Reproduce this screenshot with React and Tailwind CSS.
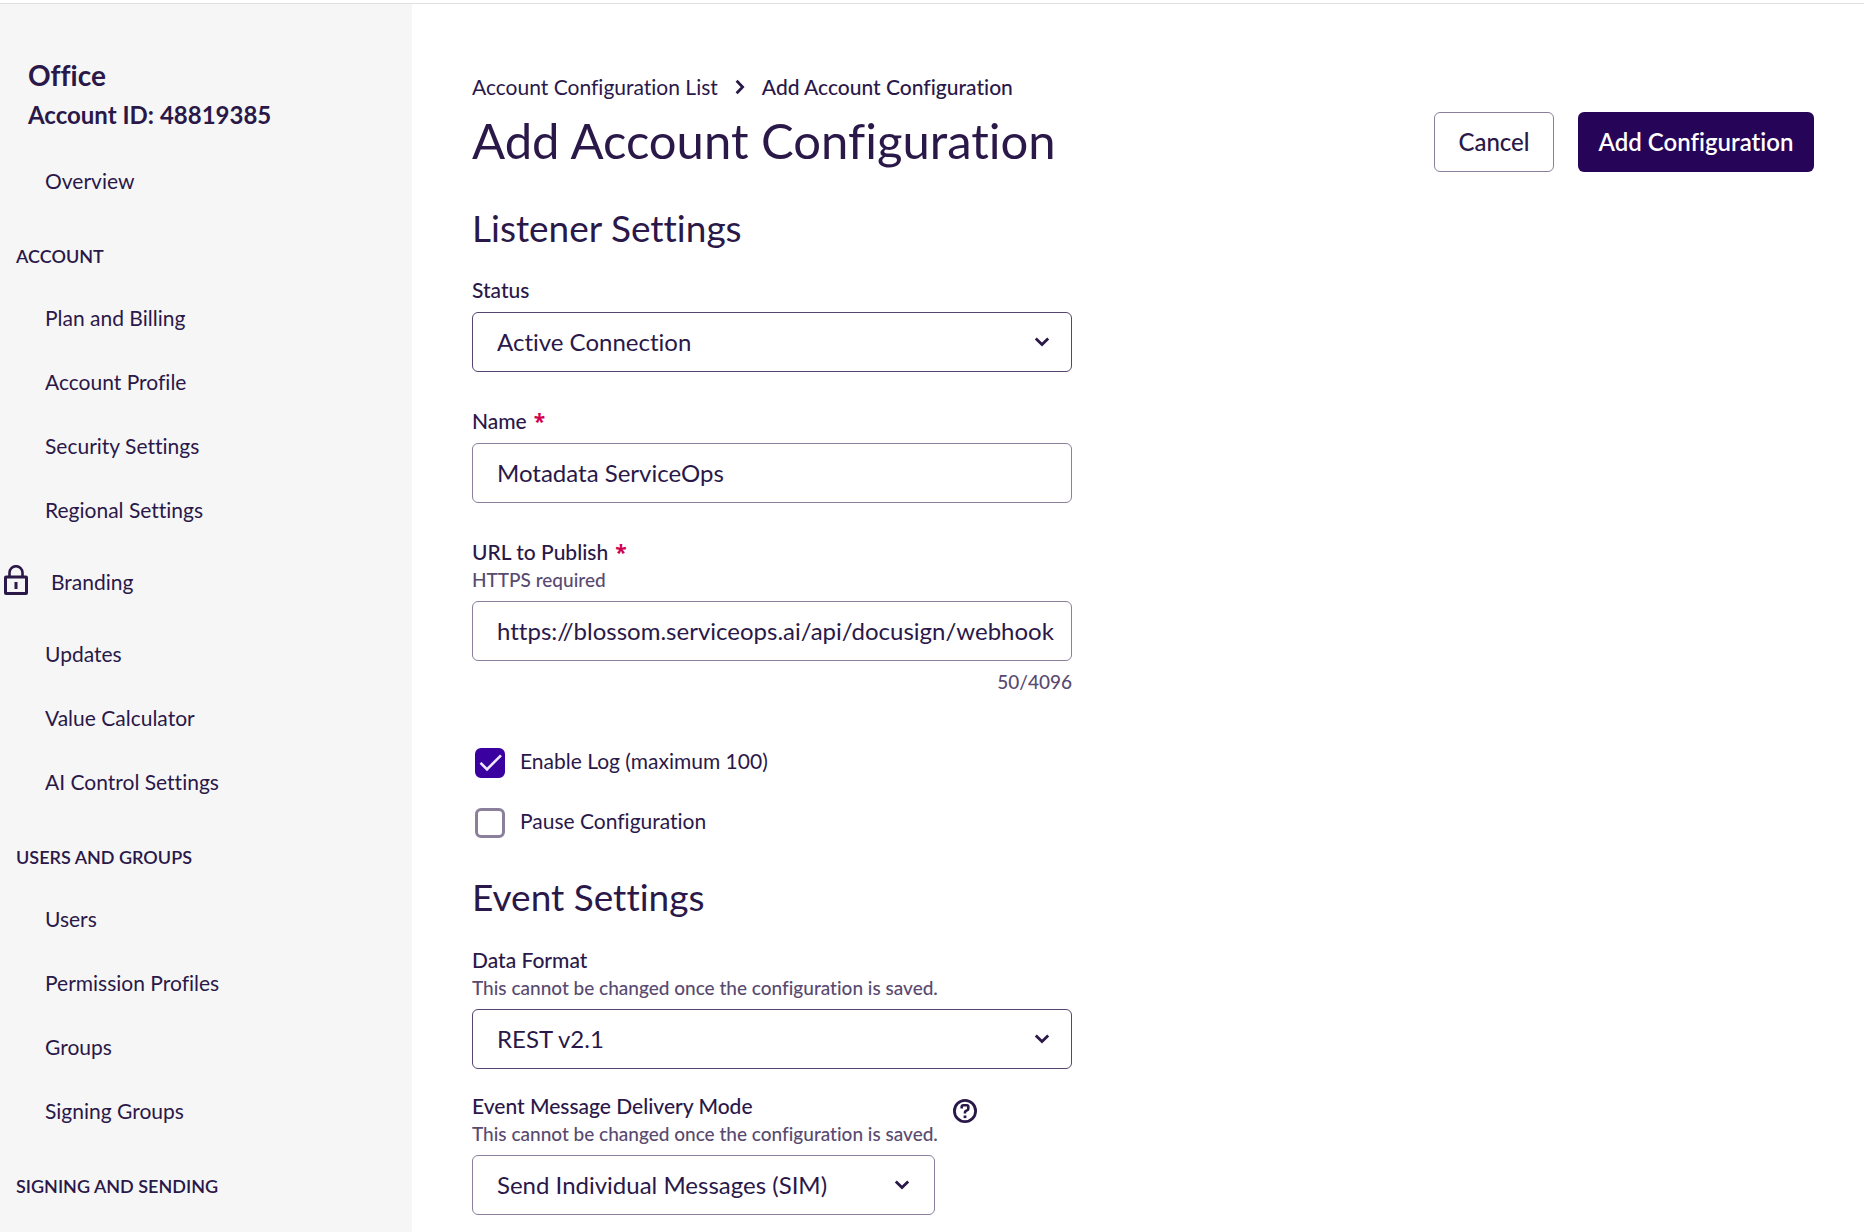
import React, { useState } from 'react';

const accountLinks = [
    'Plan and Billing',
    'Account Profile',
    'Security Settings',
    'Regional Settings',
    'Branding',
    'Updates',
    'Value Calculator',
    'AI Control Settings',
];
const userLinks = ['Users', 'Permission Profiles', 'Groups', 'Signing Groups'];

const LockIcon = () => (
    <svg className="mb-1" width="24" height="30" viewBox="0 0 24 30" fill="none" stroke="currentColor" strokeWidth="3" aria-hidden="true">
        <rect x="1.5" y="12" width="21" height="16.5" rx="0.5" />
        <path d="M5.500 12V7.700a6.500 6.500 0 0 1 13 0V12" strokeWidth="2.600" />
        <path d="M12 17v7" />
    </svg>
);

const Chevron = ({ className }) => (
    <svg className={className} width="16" height="10" viewBox="0 0 16 10" fill="none" stroke="currentColor" strokeWidth="2.8" aria-hidden="true">
        <path d="M1.8 1.6 8 7.6l6.2-6" />
    </svg>
);

const HelpIcon = () => (
    <svg width="24" height="24" viewBox="0 0 24 24" fill="none" stroke="currentColor" aria-hidden="true">
        <circle cx="12" cy="12" r="10.6" strokeWidth="2.8" />
        <path d="M8.700 9.600V7.800c0-.9.6-1.500 1.500-1.500h3.600c.9 0 1.500.6 1.500 1.500v1.900c0 .9-.4 1.400-1.200 1.700l-1.200.5c-.6.300-.9.7-.9 1.400v1.300" strokeWidth="2.600" />
        <path d="M12 16.500v2.600" strokeWidth="2.800" />
    </svg>
);

const SideLink = ({ text }) => {
    if (text === 'Branding') {
        return (
            <li>
                <a href="#" className="flex h-20 items-center gap-[23px] pl-1 text-[21px]">
                    <LockIcon />
                    {text}
                </a>
            </li>
        );
    }
    return (
        <li>
            <a href="#" className="flex h-16 items-center pl-[45px] text-[21px]">{text}</a>
        </li>
    );
};

const SideSection = ({ title, links }) => (
    <section>
        <h2 className="pt-[31px] pb-[18px] pl-4 text-[18px] leading-6 font-semibold">{title}</h2>
        <ul>
            {links.map((text) => (
                <SideLink key={text} text={text} />
            ))}
        </ul>
    </section>
);

const Label = ({ id, text, helper, required }) => (
    <>
        <label htmlFor={id} className="block text-[21px] leading-6 font-medium">
            {text}
            {required && <span className="ml-[7px] font-['Open_Sans',sans-serif] leading-none font-bold text-[#d1004f]">*</span>}
        </label>
        {helper && <p className="mt-[3px] text-[19px] leading-[26px] font-medium whitespace-nowrap text-[#594a70]">{helper}</p>}
    </>
);

const SelectBox = ({ id, options, className, iconClass = 'right-[22px]' }) => (
    <div className="relative">
        <select
            id={id}
            className={`h-15 w-full appearance-none rounded-md border bg-white pr-16 pl-6 text-[24px] ${className}`}
        >
            {options.map((o) => (
                <option key={o}>{o}</option>
            ))}
        </select>
        <Chevron className={`pointer-events-none absolute top-[25px] ${iconClass}`} />
    </div>
);

const CheckRow = ({ id, text, checked, onChange }) => (
    <div className="ml-[3px] flex items-start gap-[15px]">
        <div className="relative h-[30px] w-[30px]">
            <input
                id={id}
                type="checkbox"
                checked={checked}
                onChange={onChange}
                className="block h-[30px] w-[30px] appearance-none rounded-md border-3 border-[#8b809b] bg-white checked:border-[#3b00a0] checked:bg-[#3b00a0]"
            />
            {checked && (
                <svg className="pointer-events-none absolute inset-0" width="30" height="30" viewBox="0 0 30 30" fill="none" stroke="#ede8f7" strokeWidth="2.6" aria-hidden="true">
                    <path d="M5.500 14.800 12 21.300 26 7.300" />
                </svg>
            )}
        </div>
        <label htmlFor={id} className="text-[21px] leading-[26px]">{text}</label>
    </div>
);

const App = () => {
    const [name, setName] = useState('Motadata ServiceOps');
    const [url, setUrl] = useState('https://blossom.serviceops.ai/api/docusign/webhook');
    const [enableLog, setEnableLog] = useState(true);
    const [pause, setPause] = useState(false);

    return (
        <div className="flex min-h-screen flex-col bg-white font-['Lato','Open_Sans',sans-serif] text-[#2a1849] [font-variant-ligatures:none]">
            <div className="h-1 border-b border-[#e0e0e0]" />
            <div className="flex flex-1">
                <nav className="w-[412px] shrink-0 bg-[#f6f6f6] pt-[53px]">
                    <div className="mb-[18px] pl-7 font-bold">
                        <p className="text-[28px] leading-9">Office</p>
                        <p className="mt-1.5 text-[24px] leading-8">Account ID: 48819385</p>
                    </div>
                    <ul>
                        <SideLink text="Overview" />
                    </ul>
                    <SideSection title="ACCOUNT" links={accountLinks} />
                    <SideSection title="USERS AND GROUPS" links={userLinks} />
                    <SideSection title="SIGNING AND SENDING" links={[]} />
                </nav>

                <main className="min-w-0 flex-1 pt-[71px] pr-[50px] pl-[60px]">
                    <div className="flex items-center text-[21px] leading-6">
                        <a href="#">Account Configuration List</a>
                        <Chevron className="mx-[14px] -rotate-90" />
                        <span className="font-medium">Add Account Configuration</span>
                    </div>

                    <div className="mt-[13px] flex items-start justify-between">
                        <h1 className="text-[49px] leading-14">Add Account Configuration</h1>
                        <div className="flex gap-6">
                            <button type="button" className="h-15 w-[120px] rounded-md border border-[#8b809b] text-[24px] font-medium">
                                Cancel
                            </button>
                            <button type="button" className="h-15 w-[236px] rounded-md bg-[#260559] text-[24px] font-semibold text-white">
                                Add Configuration
                            </button>
                        </div>
                    </div>

                    <form className="w-full max-w-[600px]">
                        <h2 className="mt-[34px] mb-7 text-[37px] leading-11">Listener Settings</h2>
                        <Label id="status" text="Status" />
                        <div className="mt-2.5 mb-[37px]">
                            <SelectBox id="status" options={['Active Connection', 'Inactive Connection']} className="border-[#55456f]" />
                        </div>

                        <Label id="name" text="Name" required />
                        <input
                            id="name"
                            type="text"
                            value={name}
                            onChange={(e) => setName(e.target.value)}
                            className="mt-2.5 mb-[37px] block h-15 w-full rounded-md border border-[#8b809b] pr-3 pb-0.5 pl-6 text-[24px]"
                        />

                        <Label id="url" text="URL to Publish" helper="HTTPS required" required />
                        <input
                            id="url"
                            type="text"
                            value={url}
                            onChange={(e) => setUrl(e.target.value)}
                            className="mt-2 block h-15 w-full rounded-md border border-[#8b809b] pr-3 pb-0.5 pl-6 text-[24px]"
                        />
                        <p className="mt-2 text-right text-[19px] leading-[26px] font-medium text-[#594a70]">{url.length}/4096</p>

                        <div className="mt-[53px] flex flex-col gap-[30px]">
                            <CheckRow id="log" text="Enable Log (maximum 100)" checked={enableLog} onChange={() => setEnableLog(!enableLog)} />
                            <CheckRow id="pause" text="Pause Configuration" checked={pause} onChange={() => setPause(!pause)} />
                        </div>

                        <h2 className="mt-[37px] mb-[29px] text-[37px] leading-11">Event Settings</h2>
                        <Label id="format" text="Data Format" helper="This cannot be changed once the configuration is saved." />
                        <div className="mt-2 mb-[25px]">
                            <SelectBox id="format" options={['REST v2.1', 'Legacy XML']} className="border-[#55456f]" />
                        </div>

                        <div className="flex items-start gap-[18px]">
                            <div className="w-[463px]">
                                <Label id="mode" text="Event Message Delivery Mode" helper="This cannot be changed once the configuration is saved." />
                                <div className="mt-2">
                                    <SelectBox
                                        id="mode"
                                        options={['Send Individual Messages (SIM)', 'Aggregate']}
                                        className="border-[#8b809b]"
                                        iconClass="right-[25px]"
                                    />
                                </div>
                            </div>
                            <button type="button" aria-label="Help" className="mt-[5px]">
                                <HelpIcon />
                            </button>
                        </div>
                    </form>
                </main>
            </div>
        </div>
    );
};

export default App;
